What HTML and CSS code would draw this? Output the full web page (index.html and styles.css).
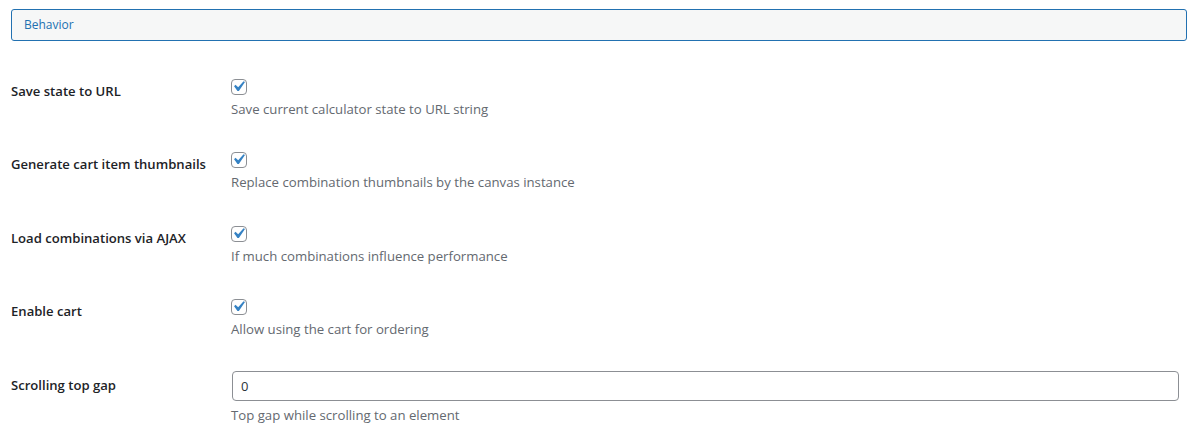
FILE: index.html
```html
<!DOCTYPE html>
<html>
<head>
<meta charset="utf-8">
<link rel="stylesheet" href="styles.css">
</head>
<body>
<div class="page">
  <div class="section-tab">Behavior</div>
  <div class="form">
    <div class="row">
      <div class="label">Save state to URL</div>
      <div class="field">
        <div class="check-line"><span class="checkbox"><svg viewBox="0 0 20 20" width="21" height="21"><path d="M14.83 4.89l1.34.94-5.81 8.38H9.02L5.78 9.67l1.34-1.25 2.57 2.4z" fill="#3582c4"/></svg></span></div>
        <p class="desc">Save current calculator state to URL string</p>
      </div>
    </div>
    <div class="row">
      <div class="label">Generate cart item thumbnails</div>
      <div class="field">
        <div class="check-line"><span class="checkbox"><svg viewBox="0 0 20 20" width="21" height="21"><path d="M14.83 4.89l1.34.94-5.81 8.38H9.02L5.78 9.67l1.34-1.25 2.57 2.4z" fill="#3582c4"/></svg></span></div>
        <p class="desc">Replace combination thumbnails by the canvas instance</p>
      </div>
    </div>
    <div class="row">
      <div class="label">Load combinations via AJAX</div>
      <div class="field">
        <div class="check-line"><span class="checkbox"><svg viewBox="0 0 20 20" width="21" height="21"><path d="M14.83 4.89l1.34.94-5.81 8.38H9.02L5.78 9.67l1.34-1.25 2.57 2.4z" fill="#3582c4"/></svg></span></div>
        <p class="desc">If much combinations influence performance</p>
      </div>
    </div>
    <div class="row">
      <div class="label">Enable cart</div>
      <div class="field">
        <div class="check-line"><span class="checkbox"><svg viewBox="0 0 20 20" width="21" height="21"><path d="M14.83 4.89l1.34.94-5.81 8.38H9.02L5.78 9.67l1.34-1.25 2.57 2.4z" fill="#3582c4"/></svg></span></div>
        <p class="desc">Allow using the cart for ordering</p>
      </div>
    </div>
    <div class="row">
      <div class="label label-input">Scrolling top gap</div>
      <div class="field field-input">
        <div class="text-input">0</div>
        <p class="desc">Top gap while scrolling to an element</p>
      </div>
    </div>
  </div>
</div>
</body>
</html>
```
FILE: styles.css
```css
html, body {
  margin: 0;
  padding: 0;
  background: #ffffff;
}
body {
  font-family: "Open Sans", "Noto Sans", sans-serif;
  font-size: 13px;
  color: #1d2327;
}
.page {
  padding: 9px 7px 0 11px;
}
.section-tab {
  height: 30px;
  border: 1px solid #2271b1;
  border-radius: 3px;
  background: #f6f7f7;
  color: #2271b1;
  font-size: 12px;
  line-height: 30px;
  padding-left: 12px;
}
.form {
  margin-top: 21px;
}
.row {
  display: flex;
  height: 73.4px;
}
.label {
  width: 220px;
  flex: none;
  padding-top: 20px;
  font-size: 13.1px;
  font-weight: 600;
  line-height: 18px;
  color: #1d2327;
}
.label-input {
  padding-top: 20px;
}
.field {
  flex: 1;
  padding-top: 15px;
  padding-right: 8px;
}
.check-line {
  height: 20px;
  display: flex;
  align-items: center;
}
.checkbox {
  width: 14px;
  height: 14px;
  border: 1px solid #8c8f94;
  border-radius: 4px;
  background: #fff;
  position: relative;
  box-sizing: content-box;
}
.checkbox svg {
  position: absolute;
  left: -4px;
  top: -4px;
}
.desc {
  margin: 2px 0 0 0;
  font-size: 13.2px;
  line-height: 21px;
  color: #646970;
}
.field-input {
  padding-top: 15px;
}
.text-input {
  height: 28px;
  border: 1px solid #8c8f94;
  border-radius: 4px;
  line-height: 28px;
  padding-left: 8px;
  font-size: 13px;
  color: #2c3338;
  margin-left: 1px;
}
.field-input .desc {
  margin-top: 4px;
}
```
